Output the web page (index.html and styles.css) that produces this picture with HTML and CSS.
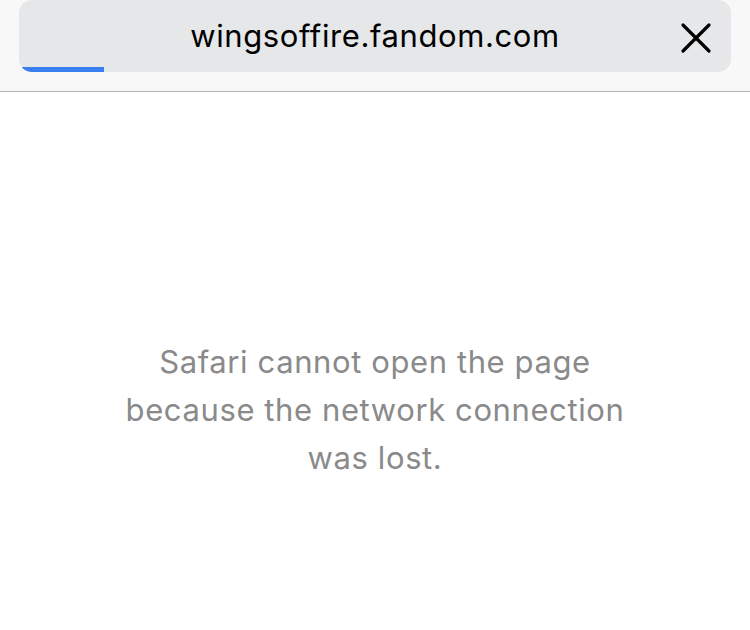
FILE: index.html
```html
<!DOCTYPE html>
<html>
<head>
<meta charset="utf-8">
<link rel="stylesheet" href="styles.css">
</head>
<body>
<header class="topbar">
  <div class="pill">
    <span class="url">wingsoffire.fandom.com</span>
    <svg class="close" width="32" height="32" viewBox="0 0 32 32">
      <path d="M3 3 L29 29 M29 3 L3 29" stroke="#000" stroke-width="3.2" stroke-linecap="round" fill="none"/>
    </svg>
    <div class="progress"></div>
  </div>
</header>
<main class="content">
  <p class="message">Safari cannot open the page because the network connection was lost.</p>
</main>
</body>
</html>
```
FILE: styles.css
```css
html, body {
  margin: 0;
  padding: 0;
  background: #ffffff;
}
body {
  width: 750px;
  height: 630px;
  overflow: hidden;
  font-family: Inter, "Liberation Sans", sans-serif;
}
.topbar {
  height: 91px;
  background: #f8f8f8;
  border-bottom: 1px solid #b3b3b3;
  padding: 0 19px;
}
.pill {
  position: relative;
  height: 72px;
  background: #e6e7e9;
  border-radius: 13px;
  overflow: hidden;
  display: flex;
  align-items: center;
  justify-content: center;
}
.url {
  font-size: 31px;
  color: #000;
  letter-spacing: 0.6px;
  margin-top: -2px;
}
.close {
  position: absolute;
  right: 19px;
  top: 22px;
}
.progress {
  position: absolute;
  left: 0;
  bottom: 0;
  width: 85px;
  height: 5px;
  background: #3a7ff0;
}
.content {
  display: flex;
  justify-content: center;
  padding-top: 246px;
}
.message {
  margin: 0;
  max-width: 515px;
  text-align: center;
  font-size: 31px;
  line-height: 48px;
  letter-spacing: 0.6px;
  color: #8a8a8a;
}
```
